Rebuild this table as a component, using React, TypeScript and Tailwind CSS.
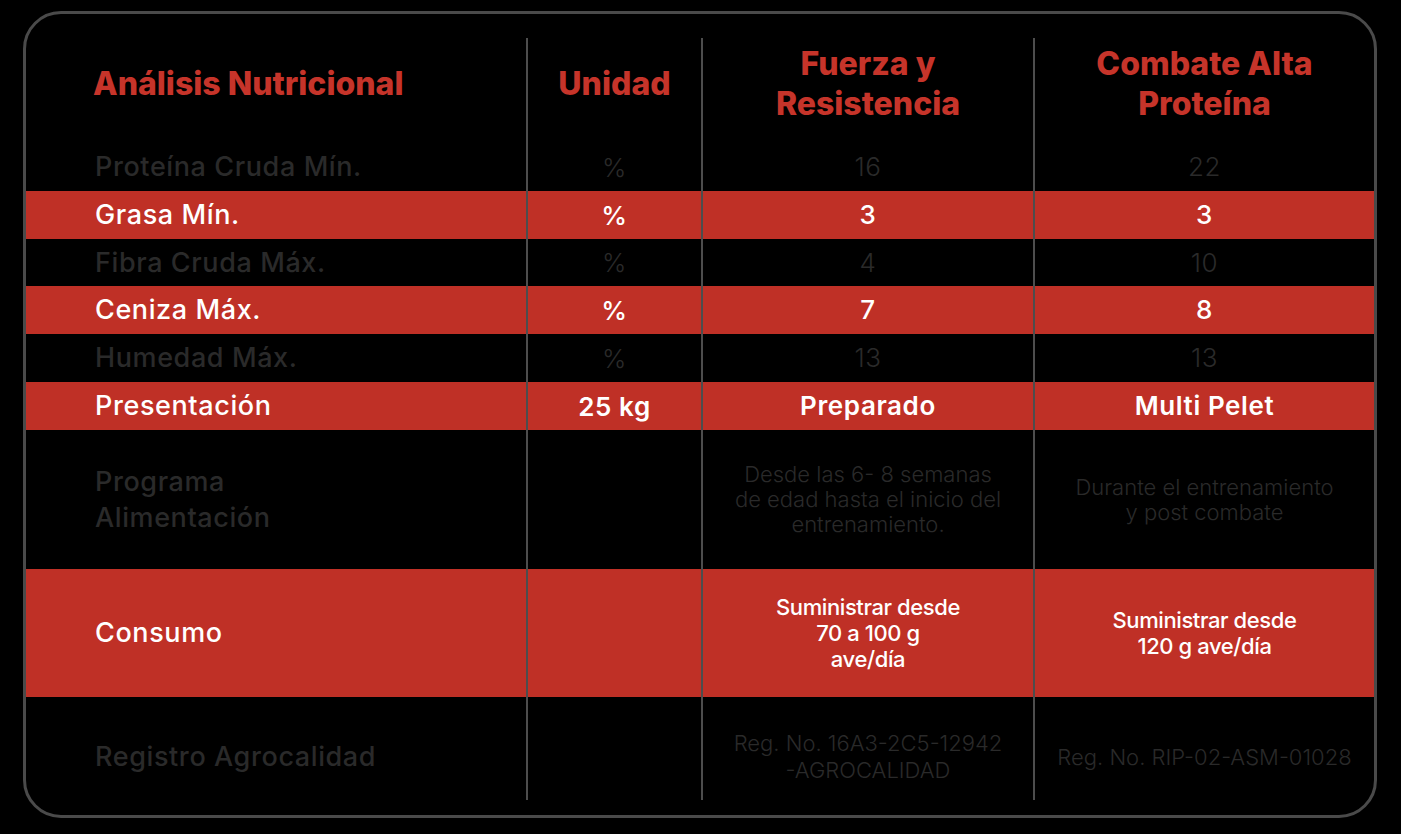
import React from "react";

type Row = {
  label: React.ReactNode;
  unit: string;
  fuerza: React.ReactNode;
  combate: React.ReactNode;
  red: boolean;
  h: string;
  small?: boolean;
  bold?: boolean;
};

const rows: Row[] = [
  { label: "Proteína Cruda Mín.", unit: "%", fuerza: "16", combate: "22", red: false, h: "h-[48px]" },
  { label: "Grasa Mín.", unit: "%", fuerza: "3", combate: "3", red: true, h: "h-[48px]" },
  { label: "Fibra Cruda Máx.", unit: "%", fuerza: "4", combate: "10", red: false, h: "h-[47px]" },
  { label: "Ceniza Máx.", unit: "%", fuerza: "7", combate: "8", red: true, h: "h-[48px]" },
  { label: "Humedad Máx.", unit: "%", fuerza: "13", combate: "13", red: false, h: "h-[48px]" },
  { label: "Presentación", unit: "25 kg", fuerza: "Preparado", combate: "Multi Pelet", red: true, h: "h-[48px]", bold: true },
  {
    label: (
      <>
        Programa
        <br />
        Alimentación
      </>
    ),
    unit: "",
    fuerza: (
      <>
        Desde las 6- 8 semanas
        <br />
        de edad hasta el inicio del
        <br />
        entrenamiento.
      </>
    ),
    combate: (
      <>
        Durante el entrenamiento
        <br />
        y post combate
      </>
    ),
    red: false,
    h: "h-[139px]",
    small: true,
  },
  {
    label: "Consumo",
    unit: "",
    fuerza: (
      <>
        Suministrar desde
        <br />
        70 a 100 g
        <br />
        ave/día
      </>
    ),
    combate: (
      <>
        Suministrar desde
        <br />
        120 g ave/día
      </>
    ),
    red: true,
    h: "h-[128px]",
    small: true,
  },
];

const font = { fontFamily: "Inter, 'Noto Sans', sans-serif" };

export default function App() {
  return (
    <div className="w-[1401px] h-[834px] bg-black overflow-hidden" style={font}>
      <div className="ml-[23px] mt-[11px] w-[1354px] h-[807px] border-[3px] border-[#4a4a4a] rounded-[38px] overflow-hidden flex flex-col">
        {/* top spacer, no dividers */}
        <div className="h-[24px]" />

        {/* header */}
        <div className="grid grid-cols-[500px_175px_332px_341px] h-[105px] text-[#c6342a] font-extrabold text-[32px] leading-[40px]">
          <div className="flex items-center pl-[67px] pb-[13px]">Análisis Nutricional</div>
          <div className="flex items-center justify-center border-l-2 border-[#4d4d4d] pb-[13px]">Unidad</div>
          <div className="flex items-center justify-center text-center border-l-2 border-[#4d4d4d] pb-[13px]">
            Fuerza y<br />Resistencia
          </div>
          <div className="flex items-center justify-center text-center border-l-2 border-[#4d4d4d] pb-[13px]">
            Combate Alta<br />Proteína
          </div>
        </div>

        {rows.map((r, i) => {
          const bg = r.red ? "bg-[#bf3026]" : "bg-black";
          const text = r.red ? "text-white" : "text-[#2a2a2a]";
          const valSize = r.small
            ? r.red
              ? "text-[22px] leading-[26px] tracking-[-0.4px]"
              : "text-[22px] leading-[25px]"
            : "text-[26px] leading-[30px] tracking-[0.6px]";
          const valWeight = r.bold ? "font-semibold" : r.red ? "font-medium" : "font-light";
          return (
            <div key={i} className={`grid grid-cols-[500px_175px_332px_341px] ${r.h} ${bg} ${text}`}>
              <div className={`flex items-center pl-[69px] text-[27px] leading-[36px] tracking-[0.6px] ${r.bold ? "font-medium" : "font-medium"}`}>
                {r.label}
              </div>
              <div className={`flex items-center justify-center border-l-2 border-[#4d4d4d] text-[26px] tracking-[0.6px] ${valWeight}`}>
                {r.unit}
              </div>
              <div className={`flex items-center justify-center text-center border-l-2 border-[#4d4d4d] ${valSize} ${valWeight}`}>
                {r.fuerza}
              </div>
              <div className={`flex items-center justify-center text-center border-l-2 border-[#4d4d4d] ${valSize} ${valWeight}`}>
                {r.combate}
              </div>
            </div>
          );
        })}

        {/* last row */}
        <div className="grid grid-cols-[500px_175px_332px_341px] h-[103px] text-[#2a2a2a]">
          <div className="flex items-center pl-[69px] pt-[17px] text-[27px] tracking-[0.6px] font-medium">Registro Agrocalidad</div>
          <div className="border-l-2 border-[#4d4d4d]" />
          <div className="flex items-center justify-center text-center border-l-2 border-[#4d4d4d] pt-[17px] text-[22px] leading-[27px] font-light">
            Reg. No. 16A3-2C5-12942
            <br />
            -AGROCALIDAD
          </div>
          <div className="flex items-center justify-center text-center border-l-2 border-[#4d4d4d] pt-[17px] text-[22px] font-light">
            Reg. No. RIP-02-ASM-01028
          </div>
        </div>
        <div className="flex-1" />
      </div>
    </div>
  );
}
